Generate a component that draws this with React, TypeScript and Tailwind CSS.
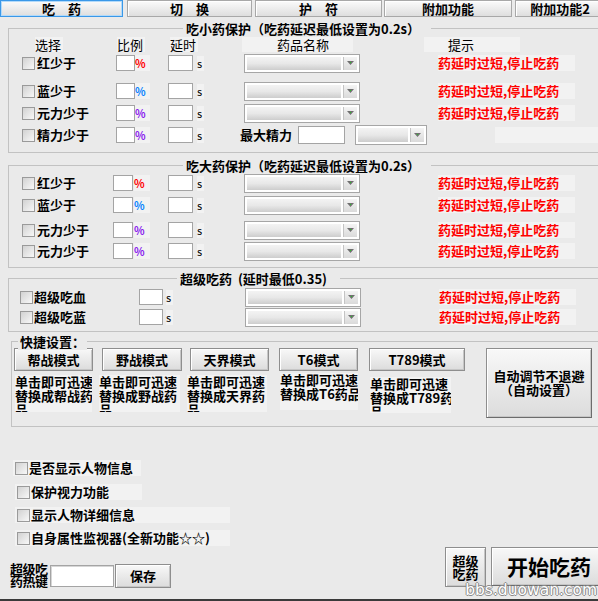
import React from 'react';

const Check = ({ className = '' }: { className?: string }) => (
  <span className={`block w-[13px] h-[13px] shrink-0 border border-[#9a9a9a] bg-linear-to-br from-[#d2d2d2] to-[#f8f8f8] ${className}`} />
);

const Field = ({ className = '' }: { className?: string }) => (
  <span className={`block shrink-0 bg-white border border-[#a4a4a4] ${className}`} />
);

const Select = ({ className = '' }: { className?: string }) => (
  <span className={`flex shrink-0 border border-[#a6a6a6] bg-white p-[2px] gap-[2px] ${className}`}>
    <span className="flex-1 bg-linear-to-b from-[#f3f3f3] via-[#e8e8e8] to-[#cdcdcd]" />
    <span className="w-[14px] flex items-center justify-center bg-linear-to-b from-[#f4f4f4] to-[#dadada] border-l border-[#c4c4c4]">
      <svg width="7" height="5" viewBox="0 0 7 5">
        <path d="M0 0h7L3.5 4z" fill="#707070" />
        <rect x="3" y="1" width="1" height="1" fill="#2c2" />
      </svg>
    </span>
  </span>
);

const Red = ({ className = '' }: { className?: string }) => (
  <span className={`block shrink-0 w-[137px] h-[16px] bg-[#f2f2f2] text-[#ff0000] font-bold leading-[16px] whitespace-nowrap ${className}`}>
    药延时过短,停止吃药
  </span>
);

const Group = ({ title, titleClass, className, children }: { title: string; titleClass: string; className: string; children: React.ReactNode }) => (
  <div className={`relative shrink-0 border-l border-t border-b border-[#c2c2c2] ${className}`}>
    <span className={`absolute top-[-9px] h-[17px] leading-[17px] bg-[#eaeaea] font-bold whitespace-nowrap ${titleClass}`}>{title}</span>
    {children}
  </div>
);

type RowProps = { label: string; pct: string; v2?: boolean; tail?: React.ReactNode; className?: string };

const MedRow = ({ label, pct, v2, tail, className = '' }: RowProps) => (
  <div className={`flex items-center h-[20px] ${className}`}>
    <Check className="ml-[13px]" />
    <span className={`ml-[2px] font-bold leading-[16px] shrink-0 ${v2 ? 'w-[76px]' : 'w-[79px]'}`}>{label}</span>
    <Field className={`h-[16px] ${v2 ? 'w-[20px]' : 'w-[19px]'}`} />
    <span className={`shrink-0 h-[16px] bg-[#f2f2f2] text-[11px] font-bold leading-[16px] ${v2 ? 'ml-[1px] w-[16px]' : 'w-[15px]'} ${pct}`}>%</span>
    <Field className="ml-[18px] w-[25px] h-[16px]" />
    <span className="ml-[4px] w-[7px] h-[15px] shrink-0 bg-[#f2f2f2] text-[11px] leading-[15px]">s</span>
    {tail ?? (
      <>
        <Select className="ml-[40px] w-[116px] h-[19px]" />
        <Red className="ml-[78px]" />
      </>
    )}
  </div>
);

const SuperRow = ({ label, className = '' }: { label: string; className?: string }) => (
  <div className={`flex items-center h-[20px] ${className}`}>
    <Check className="ml-[11px]" />
    <span className="ml-[1px] w-[105px] shrink-0 font-bold leading-[16px]">{label}</span>
    <Field className="w-[24px] h-[16px]" />
    <span className="ml-[3px] w-[7px] h-[15px] shrink-0 bg-[#f2f2f2] text-[11px] leading-[15px]">s</span>
    <Select className="ml-[72px] w-[116px] h-[19px]" />
    <Red className="ml-[78px]" />
  </div>
);

const btn =
  'shrink-0 border border-[#8e8e8e] bg-linear-to-b from-[#f8f8f8] to-[#dcdcdc] shadow-[inset_1px_1px_0_#ffffff,inset_-1px_-1px_0_#c6c6c6] font-bold flex items-center justify-center';

const tabs = [
  { label: '吃\u3000药', cls: 'w-[123px]', active: true },
  { label: '切\u3000换', cls: 'ml-[4px] w-[125px]' },
  { label: '护\u3000符', cls: 'ml-[3px] w-[127px]' },
  { label: '附加功能', cls: 'ml-[2px] w-[128px]' },
  { label: '附加功能2', cls: 'ml-[3px] w-[90px]' },
];

const modes = [
  { name: '帮战模式', col: 'ml-[2px] w-[79px]', desc: 'ml-[1px] w-[77px] mt-[4px] h-[37px]', lines: ['单击即可迅速', '替换成帮战药', '品'] },
  { name: '野战模式', col: 'ml-[9px] w-[80px]', desc: 'ml-[-3px] w-[81px] mt-[4px] h-[37px]', lines: ['单击即可迅速', '替换成野战药', '品'] },
  { name: '天界模式', col: 'ml-[8px] w-[79px]', desc: 'ml-[-3px] w-[80px] mt-[4px] h-[37px]', lines: ['单击即可迅速', '替换成天界药', '品'] },
  { name: 'T6模式', col: 'ml-[10px] w-[79px]', desc: 'ml-[1px] w-[78px] mt-[2px] h-[37px]', lines: ['单击即可迅速', '替换成T6药品'] },
  { name: 'T789模式', col: 'ml-[11px] w-[96px]', desc: 'ml-[1px] w-[81px] mt-[6px] h-[36px]', lines: ['单击即可迅速', '替换成T789药', '品'] },
];

export default function App() {
  return (
    <div className="relative flex flex-col items-start w-[598px] h-[601px] overflow-hidden bg-[#eaeaea] border-b-2 border-[#3a3a3a] text-black text-[13px] font-['Noto_Sans_CJK_SC',sans-serif]">
      {/* tabs */}
      <div className="flex h-[18px] shrink-0">
        {tabs.map(t => (
          <div
            key={t.label}
            className={`h-[17px] shrink-0 flex items-center justify-center font-bold leading-[15px] bg-linear-to-b from-[#fbfbfb] to-[#dedede] border ${t.cls} ${
              t.active ? 'border-[#3a98e8] shadow-[inset_0_0_0_1px_#b2dafa]' : 'border-[#a8a8a8] shadow-[inset_1px_1px_0_#ffffff]'
            }`}
          >
            {t.label}
          </div>
        ))}
      </div>

      {/* small potion protection */}
      <Group className="mt-[10px] ml-[8px] h-[125px] w-[600px]" title="吃小药保护（吃药延迟最低设置为0.2s）" titleClass="left-[174px] px-[3px] w-[248px]">
        <div className="flex items-center h-[16px] mt-[7px] leading-[15px]">
          <span className="ml-[26px] w-[28px] h-[15px] shrink-0 bg-[#f2f2f2]">选择</span>
          <span className="ml-[54px] w-[28px] h-[15px] shrink-0 bg-[#f2f2f2]">比例</span>
          <span className="ml-[25px] w-[28px] h-[15px] shrink-0 bg-[#f2f2f2]">延时</span>
          <span className="ml-[44px] w-[111px] h-[15px] shrink-0 bg-[#f2f2f2] pl-[35px]">药品名称</span>
          <span className="ml-[71px] w-[96px] h-[15px] shrink-0 bg-[#f2f2f2] pl-[24px]">提示</span>
        </div>
        <MedRow className="mt-[1px]" label="红少于" pct="text-[#ff0000]" />
        <MedRow className="mt-[8px]" label="蓝少于" pct="text-[#0a84ff]" />
        <MedRow className="mt-[2px]" label="元力少于" pct="text-[#8a22ee]" />
        <MedRow
          className="mt-[2px]"
          label="精力少于"
          pct="text-[#8a22ee]"
          tail={
            <>
              <span className="ml-[36px] w-[58px] shrink-0 font-bold">最大精力</span>
              <Field className="w-[47px] h-[18px]" />
              <Select className="ml-[10px] w-[72px] h-[20px]" />
              <span className="block ml-[68px] w-[110px] h-[16px] shrink-0 bg-[#f2f2f2]" />
            </>
          }
        />
      </Group>

      {/* big potion protection */}
      <Group className="mt-[12px] ml-[8px] h-[103px] w-[600px]" title="吃大药保护（吃药延迟最低设置为0.2s）" titleClass="left-[174px] px-[3px] w-[248px]">
        <MedRow v2 className="mt-[7px]" label="红少于" pct="text-[#ff0000]" />
        <MedRow v2 className="mt-[2px]" label="蓝少于" pct="text-[#0a84ff]" />
        <MedRow v2 className="mt-[5px]" label="元力少于" pct="text-[#8a22ee]" />
        <MedRow v2 className="mt-[1px]" label="元力少于" pct="text-[#8a22ee]" />
      </Group>

      {/* super potion */}
      <Group className="mt-[10px] ml-[8px] h-[54px] w-[600px]" title={'超级吃药\u00a0\u00a0(延时最低0.35)'} titleClass="left-[168px] px-[3px] w-[163px]">
        <SuperRow className="mt-[8px]" label="超级吃血" />
        <SuperRow label="超级吃蓝" />
      </Group>

      {/* quick settings */}
      <Group className="mt-[9px] ml-[11px] h-[86px] w-[600px]" title="快捷设置：" titleClass="left-[6px] px-[2px]">
        <div className="flex items-start pt-[6px]">
          {modes.map(m => (
            <div key={m.name} className={`flex flex-col shrink-0 ${m.col}`}>
              <div className={`${btn} h-[23px] leading-[15px]`}>{m.name}</div>
              <div className={`bg-[#f2f2f2] font-bold leading-[14px] overflow-hidden whitespace-nowrap ${m.desc}`}>
                {m.lines.map(l => (
                  <div key={l}>{l}</div>
                ))}
              </div>
            </div>
          ))}
          <div className={`${btn} ml-[21px] w-[106px] h-[70px] flex-col leading-[14px] border-r-[#6c6c6c] border-b-[#6c6c6c]`}>
            <span>自动调节不退避</span>
            <span>（自动设置）</span>
          </div>
        </div>
      </Group>

      {/* options */}
      <div className="mt-[33px] ml-[13px] w-[128px] h-[16px] flex items-center bg-[#f2f2f2]">
        <Check className="ml-[2px]" />
        <span className="ml-[1px] font-bold leading-[16px] whitespace-nowrap">是否显示人物信息</span>
      </div>
      <div className="mt-[8px] ml-[15px] w-[127px] h-[16px] flex items-center bg-[#f2f2f2]">
        <Check className="ml-[2px]" />
        <span className="ml-[1px] font-bold leading-[16px] whitespace-nowrap">保护视力功能</span>
      </div>
      <div className="mt-[7px] ml-[15px] w-[215px] h-[16px] flex items-center bg-[#f2f2f2]">
        <Check className="ml-[2px]" />
        <span className="ml-[1px] font-bold leading-[16px] whitespace-nowrap">显示人物详细信息</span>
      </div>
      <div className="mt-[7px] ml-[15px] w-[215px] h-[16px] flex items-center bg-[#f2f2f2]">
        <Check className="ml-[2px]" />
        <span className="ml-[1px] font-bold leading-[16px] whitespace-nowrap">自身属性监视器(全新功能☆☆)</span>
      </div>

      {/* bottom row */}
      <div className="mt-[1px] h-[41px] w-[598px] flex items-end">
        <div className="ml-[10px] mb-[1px] w-[40px] shrink-0 font-bold text-[13px] leading-[12px] tracking-[-0.5px] whitespace-nowrap">
          <div>超级吃</div>
          <div>药热键</div>
        </div>
        <Field className="mb-[1px] w-[64px] h-[22px] shadow-[inset_1px_1px_0_#d6d6d6]" />
        <div className={`${btn} ml-[1px] w-[56px] h-[24px]`}>保存</div>
        <div className={`${btn} ml-[274px] mb-[1px] w-[41px] h-[40px] flex-col leading-[13px]`}>
          <span>超级</span>
          <span>吃药</span>
        </div>
        <div className={`${btn} ml-[5px] mb-[2px] w-[110px] h-[39px] text-[21px] pl-[15px] justify-start border-r-[#6c6c6c] border-b-[#6c6c6c]`}>开始吃药</div>
      </div>

      <span className="absolute right-[1px] bottom-[1px] text-[15.5px] leading-[16px] text-white font-['DejaVu_Sans',sans-serif] [text-shadow:1px_0_#8a8a8a,-1px_0_#8a8a8a,0_1px_#8a8a8a,0_-1px_#8a8a8a]">
        bbs.duowan.com
      </span>
    </div>
  );
}
